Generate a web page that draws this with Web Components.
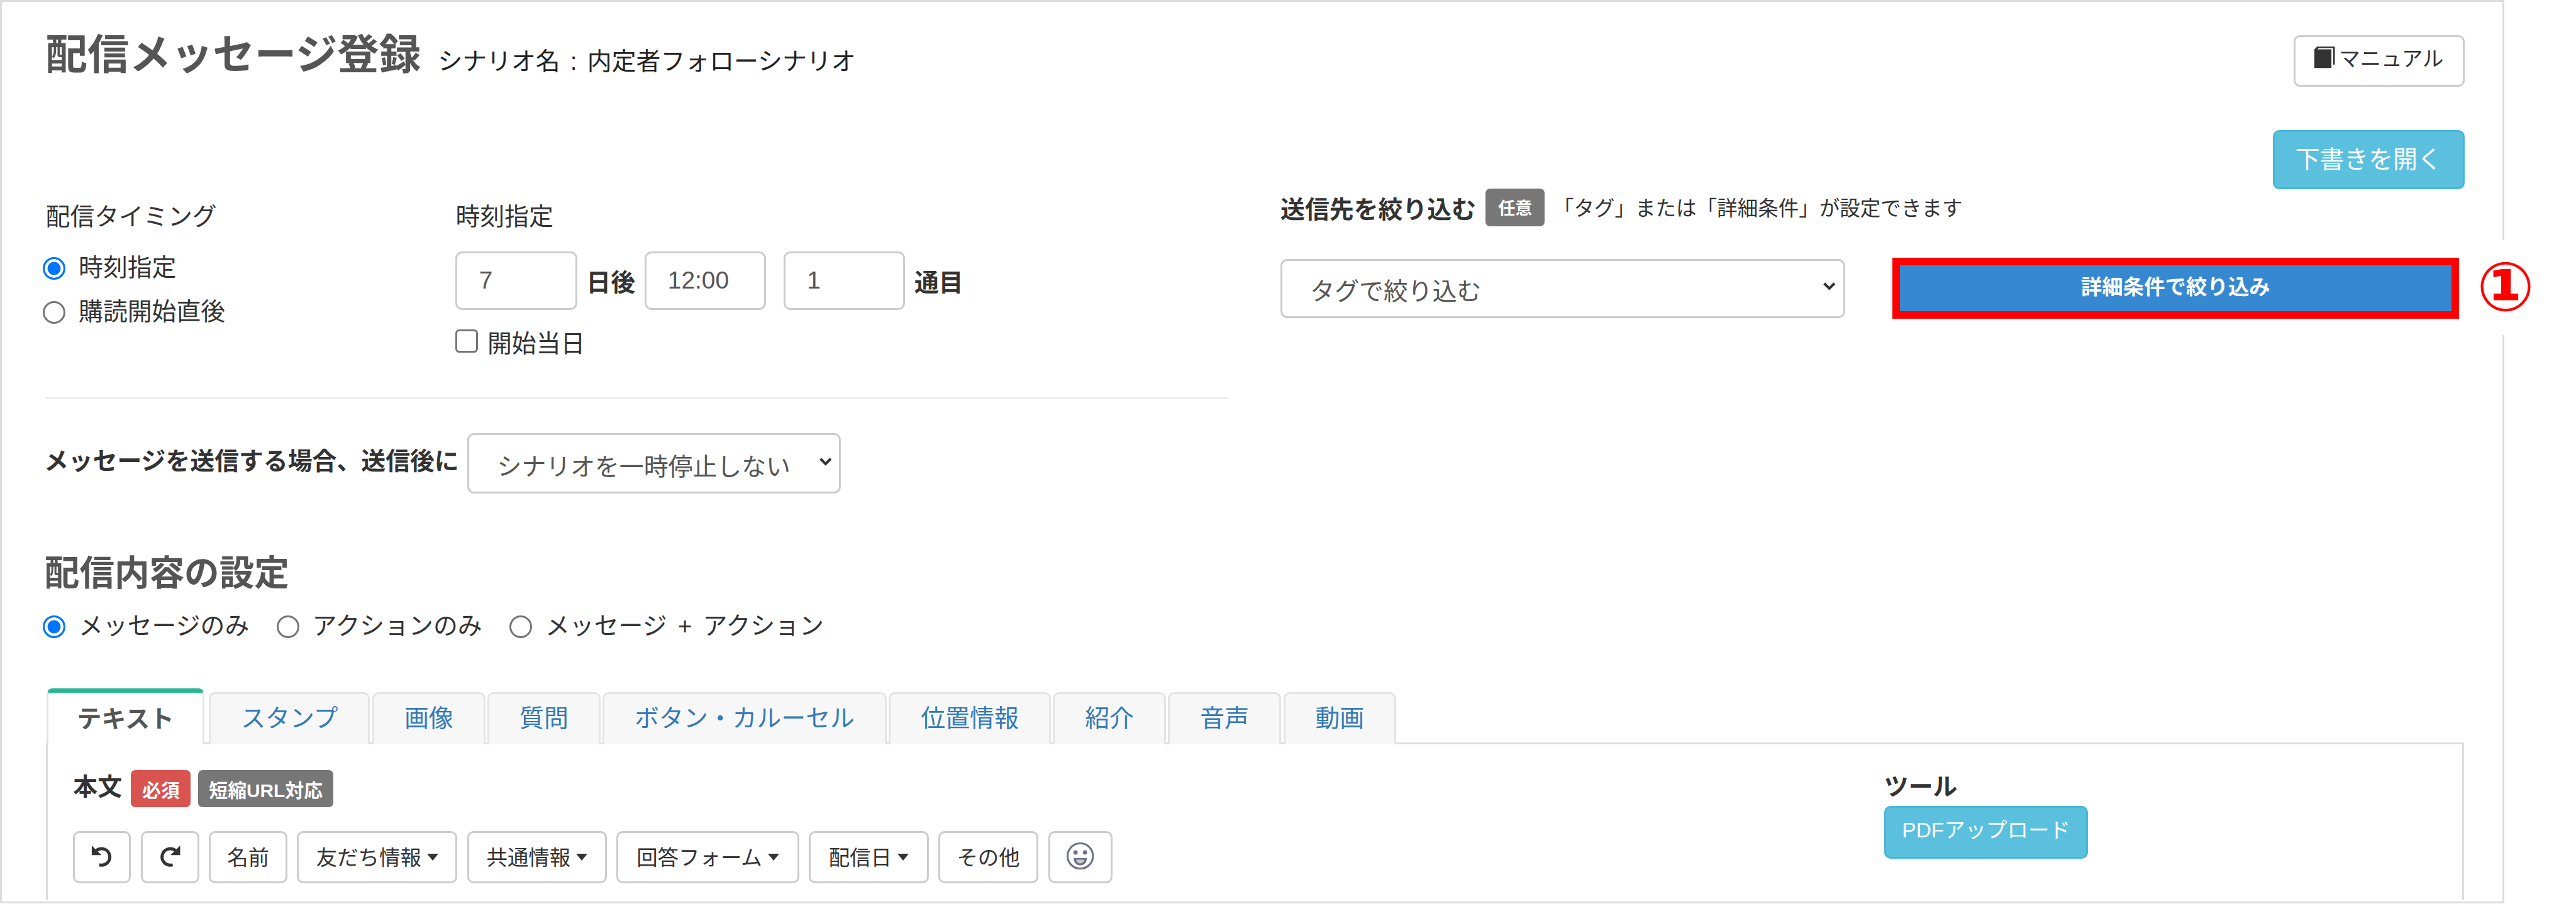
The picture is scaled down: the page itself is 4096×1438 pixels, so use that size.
<!DOCTYPE html>
<html lang="ja">
<head>
<meta charset="utf-8">
<title>配信メッセージ登録</title>
<style>
    /* 1rem = 10 reference pixels at the 0.904 scale */
    html { font-size: 9.04px; overflow: hidden; }
    body {
        margin: 0;
        background: #fff;
        color: #333;
        font-family: "Liberation Sans", "Noto Sans CJK JP", sans-serif;
        font-size: 4.3rem;
    }
    .timing { display: grid; grid-template-columns: 72.1rem 1fr; padding-top: 12.3rem; }
    .stack { display: flex; flex-direction: column; }
    .inputs { display: flex; align-items: center; margin-top: 3rem; height: 10.3rem; }
    .pick { display: flex; margin-top: 5.5rem; align-items: center; justify-content: space-between; }
</style>
</head>
<body>
<page-frame>
    <page-head slot="head"></page-head>

    <two-cols>
        <div slot="left">
            <div class="timing">
                <div class="stack">
                    <field-label>配信タイミング</field-label>
                    <radio-list>
                        <ui-radio checked style="height:7.7rem">時刻指定</ui-radio>
                        <ui-radio style="height:7.7rem">購読開始直後</ui-radio>
                    </radio-list>
                </div>
                <div class="stack">
                    <field-label>時刻指定</field-label>
                    <div class="inputs">
                        <ui-input>7</ui-input>
                        <b style="width:11.8rem;padding-left:1.6rem;box-sizing:border-box">日後</b>
                        <ui-input>12:00</ui-input>
                        <span style="width:3.1rem"></span>
                        <ui-input>1</ui-input>
                        <b style="padding-left:1.6rem">通目</b>
                    </div>
                    <ui-check>開始当日</ui-check>
                </div>
            </div>
            <section-rule></section-rule>
        </div>
        <div slot="right">
            <ui-btn kind="info" style="margin-left:auto;width:33.7rem;height:10.4rem;padding-bottom:1rem">下書きを開く</ui-btn>
            <target-row></target-row>
            <div class="pick">
                <ui-select style="width:99.3rem;height:10.4rem">タグで絞り込む</ui-select>
                <focus-button>詳細条件で絞り込み</focus-button>
            </div>
        </div>
    </two-cols>

    <message-row></message-row>
    <section-head>配信内容の設定</section-head>
    <radio-list row>
        <ui-radio checked>メッセージのみ</ui-radio>
        <ui-radio>アクションのみ</ui-radio>
        <ui-radio>メッセージ + アクション</ui-radio>
    </radio-list>
    <tab-bar>
        <tab-item active>テキスト</tab-item>
        <tab-item>スタンプ</tab-item>
        <tab-item>画像</tab-item>
        <tab-item>質問</tab-item>
        <tab-item>ボタン・カルーセル</tab-item>
        <tab-item>位置情報</tab-item>
        <tab-item>紹介</tab-item>
        <tab-item>音声</tab-item>
        <tab-item>動画</tab-item>
    </tab-bar>
    <editor-panel></editor-panel>

    <step-mark slot="over">①</step-mark>
</page-frame>

<script>
class PageFrame extends HTMLElement {
    constructor() {
        super();
        this.shadowDOM = this.attachShadow({mode: 'open'});
        this.shadowDOM.innerHTML = `
        <style>
            :host {
                display: block;
                position: relative;
                box-sizing: border-box;
                width: 440.5rem;
                height: 159rem;
                border: solid #ddd;
                border-width: 3px;
                padding: 0 6.7rem 0 7.7rem;
            }
        </style>
        <slot name="head"></slot>
        <slot></slot>
        <slot name="over"></slot>
        `;
    }
}

class PageHead extends HTMLElement {
    constructor() {
        super();
        this.shadowDOM = this.attachShadow({mode: 'open'});
        this.shadowDOM.innerHTML = `
        <style>
            :host { display: flex; justify-content: space-between; align-items: flex-start; padding-top: 5.9rem; }
            .title { display: flex; align-items: baseline; gap: 3rem; margin-top: -.2rem; }
            h1 { margin: 0; font-size: 7.35rem; line-height: 7.2rem; font-weight: 700; color: #555; }
            span { font-size: 4.3rem; line-height: 4.3rem; color: #222; word-spacing: .6rem; position: relative; top: .2rem; }
            svg { width: 3.6rem; height: 4rem; margin-right: .7rem; flex: none; }
        </style>
        <div class="title">
            <h1>配信メッセージ登録</h1>
            <span>シナリオ名 : 内定者フォローシナリオ</span>
        </div>
        <ui-btn style="width:30rem;height:9rem;font-size:3.7rem;padding-bottom:1.4rem">
            <svg viewBox="0 0 36 40"><path fill="#333" d="M5 1h31v32h-3V4H8L5 6h25v33H0V6z"/></svg>マニュアル
        </ui-btn>
        `;
    }
}

class TwoCols extends HTMLElement {
    constructor() {
        super();
        this.shadowDOM = this.attachShadow({mode: 'open'});
        this.shadowDOM.innerHTML = `
        <style>
            :host { display: grid; grid-template-columns: 208.1rem 1fr; column-gap: 9.1rem; margin-top: 7.7rem; }
            slot[name=right]::slotted(div) { display: flex; flex-direction: column; }
        </style>
        <slot name="left"></slot>
        <slot name="right"></slot>
        `;
    }
}

class FieldLabel extends HTMLElement {
    constructor() {
        super();
        this.attachShadow({mode: 'open'}).innerHTML = `
        <style>:host { display: block; line-height: 6rem; font-size: 4.3rem; color: #333; }</style>
        <slot></slot>`;
    }
}

class RadioList extends HTMLElement {
    constructor() {
        super();
        this.attachShadow({mode: 'open'}).innerHTML = `
        <style>
            :host { display: flex; flex-direction: column; margin: 2.2rem 0 0 -.5rem; }
            :host([row]) { flex-direction: row; gap: 4.8rem; margin-top: 2.6rem; }
        </style>
        <slot></slot>`;
    }
}

class UiRadio extends HTMLElement {
    constructor() {
        super();
        this.attachShadow({mode: 'open'}).innerHTML = `
        <style>
            :host { display: flex; align-items: center; gap: 2.3rem; height: 6rem; font-size: 4.3rem; color: #333; }
            i { box-sizing: border-box; width: 4rem; height: 4rem; border-radius: 50%; border: 3px solid #767676; background: #fff; flex: none; }
            :host([checked]) i { border-color: #0075ff; background: #0075ff; box-shadow: inset 0 0 0 .5rem #fff; }
            span { padding-bottom: 1.1rem; word-spacing: .7rem; }
        </style>
        <i></i><span><slot></slot></span>`;
    }
}

class UiInput extends HTMLElement {
    constructor() {
        super();
        this.attachShadow({mode: 'open'}).innerHTML = `
        <style>
            :host {
                display: flex; align-items: center; box-sizing: border-box;
                width: 21.4rem; height: 10.3rem; padding-left: 3.8rem;
                border: 3px solid #ccc; border-radius: 1.2rem;
                font-size: 4.3rem; color: #555; background: #fff;
            }
        </style>
        <slot></slot>`;
    }
}

class UiCheck extends HTMLElement {
    constructor() {
        super();
        this.attachShadow({mode: 'open'}).innerHTML = `
        <style>
            :host { display: flex; align-items: center; gap: 1.7rem; height: 6rem; margin-top: 2.5rem; font-size: 4.3rem; color: #333; }
            i { box-sizing: border-box; width: 3.9rem; height: 4.1rem; border: 3px solid #767676; border-radius: .7rem; background: #fff; }
        </style>
        <i></i><span><slot></slot></span>`;
    }
}

class SectionRule extends HTMLElement {
    constructor() {
        super();
        this.attachShadow({mode: 'open'}).innerHTML = `
        <style>:host { display: block; margin-top: 6.9rem; border-top: 3px solid #eee; }</style>`;
    }
}

class UiBtn extends HTMLElement {
    constructor() {
        super();
        this.attachShadow({mode: 'open'}).innerHTML = `
        <style>
            :host {
                display: inline-flex; align-items: center; justify-content: center; box-sizing: border-box;
                border: 3px solid #ccc; border-radius: 1.1rem;
                background: #fff; color: #333; font-size: 4.3rem; white-space: nowrap;
            }
            :host([kind=info]) { background: #5bc0de; border-color: #46b8da; color: #fff; }
        </style>
        <slot></slot>`;
    }
}

class UiSelect extends HTMLElement {
    constructor() {
        super();
        this.attachShadow({mode: 'open'}).innerHTML = `
        <style>
            :host {
                display: flex; align-items: center; justify-content: space-between; box-sizing: border-box;
                padding: 0 1.1rem 0 4.9rem;
                border: 3px solid #ccc; border-radius: 1.2rem;
                background: #fff; color: #555; font-size: 4.3rem;
            }
            span { padding-top: .4rem; }
            svg { width: 2.6rem; height: 1.7rem; margin-top: -.6rem; }
        </style>
        <span><slot></slot></span>
        <svg viewBox="0 0 26 17"><path d="M4 3l9 9 9-9" fill="none" stroke="#333" stroke-width="4.5"/></svg>`;
    }
}

class FocusButton extends HTMLElement {
    constructor() {
        super();
        this.attachShadow({mode: 'open'}).innerHTML = `
        <style>
            :host {
                display: flex; align-items: center; justify-content: center; box-sizing: border-box;
                width: 99.6rem; height: 10.8rem; margin-right: 1rem; padding-bottom: 1.2rem;
                border: 12px solid #f00;
                background: #3688d0; color: #fff; font-size: 3.7rem; font-weight: 700;
            }
        </style>
        <slot></slot>`;
    }
}

class TargetRow extends HTMLElement {
    constructor() {
        super();
        this.attachShadow({mode: 'open'}).innerHTML = `
        <style>
            :host { display: flex; align-items: center; height: 6.7rem; margin-top: -.2rem; color: #333; }
            b { font-size: 4.3rem; }
            em {
                display: flex; align-items: center; justify-content: center;
                width: 10.4rem; height: 6.7rem; margin: 0 1.5rem 0 1.7rem;
                border-radius: .8rem; background: #777; color: #fff;
                font-size: 3rem; font-weight: 700; font-style: normal;
            }
            span { font-size: 3.6rem; padding-bottom: .3rem; }
        </style>
        <b>送信先を絞り込む</b><em>任意</em><span>「タグ」または「詳細条件」が設定できます</span>`;
    }
}

class MessageRow extends HTMLElement {
    constructor() {
        super();
        this.attachShadow({mode: 'open'}).innerHTML = `
        <style>
            :host { display: flex; align-items: center; gap: 1.5rem; margin: 6rem 0 0 -.3rem; }
            b { font-size: 4.3rem; color: #333; margin-top: -1.6rem; }
        </style>
        <b>メッセージを送信する場合、送信後に</b>
        <ui-select style="width:65.7rem;height:10.6rem">シナリオを一時停止しない</ui-select>`;
    }
}

class SectionHead extends HTMLElement {
    constructor() {
        super();
        this.attachShadow({mode: 'open'}).innerHTML = `
        <style>:host { display: block; margin: 9.8rem 0 0 -.2rem; padding-top: .3rem; height: 7.7rem; font-size: 6.15rem; line-height: 8rem; font-weight: 700; color: #555; }</style>
        <slot></slot>`;
    }
}

class TabBar extends HTMLElement {
    constructor() {
        super();
        this.attachShadow({mode: 'open'}).innerHTML = `
        <style>
            :host { display: flex; align-items: flex-end; gap: .4rem; position: relative; z-index: 1; margin: 7.9rem 0 -3px .2rem; }
        </style>
        <slot></slot>`;
    }
}

class TabItem extends HTMLElement {
    constructor() {
        super();
        this.attachShadow({mode: 'open'}).innerHTML = `
        <style>
            :host {
                display: flex; align-items: center; box-sizing: border-box;
                height: 9.2rem; padding: 0 5.3rem 1rem;
                border: 3px solid #e4e4e4; border-bottom: 0; border-radius: 1.1rem 1.1rem 0 0;
                background: #f7f7f7; color: #337ab7; font-size: 4.3rem;
            }
            :host([active]) {
                height: 9.8rem; padding: 0 5rem .6rem; margin-right: .4rem;
                border-top: .8rem solid #2bb594; border-radius: 1rem 1rem 0 0;
                background: #fff; color: #555; font-weight: 700;
            }
        </style>
        <slot></slot>`;
    }
}

class EditorPanel extends HTMLElement {
    constructor() {
        super();
        const arrow = `<path fill="none" stroke="#333" stroke-width="5.5" d="M9 10a14.5 14.5 0 1 1 5 25"/><path fill="#333" d="M1 1v17h17z"/>`;
        const face = `<svg viewBox="0 0 48 48" style="width:4.8rem;height:4.8rem"><circle cx="24" cy="24" r="22.3" fill="none" stroke="#6d7186" stroke-width="3.4"/><circle cx="15.7" cy="17.7" r="3.8" fill="#6d7186"/><circle cx="32.3" cy="17.7" r="3.8" fill="#6d7186"/><path d="M12.3 27.3h23.4c0 8-5 13-11.7 13s-11.7-5-11.7-13z" fill="#6d7186"/><path d="M17 30.3h14c-1 4-3 6.5-7 6.5s-6-2.5-7-6.5z" fill="#c9cad3"/></svg>`;
        this.attachShadow({mode: 'open'}).innerHTML = `
        <style>
            :host {
                display: flex; justify-content: space-between; box-sizing: border-box;
                width: 425.4rem; height: 27.8rem; padding: 4.6rem 0 0 4.5rem;
                border: solid #ddd; border-width: 3px 3px 0;
                overflow: hidden;
            }
            .head { display: flex; align-items: center; height: 6.5rem; }
            b { font-size: 4.3rem; color: #333; }
            .head b { padding-bottom: 1.6rem; }
            em {
                display: flex; align-items: center; justify-content: center; height: 6.5rem;
                border-radius: .8rem; color: #fff; font-size: 3.3rem; font-weight: 700; font-style: normal;
            }
            .red { background: #d9534f; width: 10.5rem; margin-left: 1.6rem; }
            .gray { background: #777; width: 23.8rem; margin-left: 1.3rem; }
            .bar { display: flex; gap: 1.7rem; margin-top: 4.2rem; }
            .bar ui-btn { height: 9.2rem; font-size: 3.7rem; padding-bottom: .5rem; }
            .bar svg.arrow { width: 3.8rem; height: 3.8rem; }
            u { width: 0; height: 0; margin-left: 1rem; border: 1rem solid transparent; border-top: 1.3rem solid #333; border-bottom: 0; margin-top: .5rem; }
            .tool { width: 101.7rem; flex: none; }
            .tool b { display: block; line-height: 6rem; }
        </style>
        <div>
            <div class="head"><b>本文</b><em class="red">必須</em><em class="gray">短縮URL対応</em></div>
            <div class="bar">
                <ui-btn style="width:10.2rem"><svg class="arrow" viewBox="0 0 38 38">${arrow}</svg></ui-btn>
                <ui-btn style="width:10.3rem"><svg class="arrow" viewBox="0 0 38 38" style="transform:scaleX(-1)">${arrow}</svg></ui-btn>
                <ui-btn style="width:13.8rem">名前</ui-btn>
                <ui-btn style="width:28.2rem">友だち情報<u></u></ui-btn>
                <ui-btn style="width:24.6rem">共通情報<u></u></ui-btn>
                <ui-btn style="width:32.1rem">回答フォーム<u></u></ui-btn>
                <ui-btn style="width:21.1rem">配信日<u></u></ui-btn>
                <ui-btn style="width:17.6rem">その他</ui-btn>
                <ui-btn style="width:11.3rem">${face}</ui-btn>
            </div>
        </div>
        <div class="tool">
            <b>ツール</b>
            <ui-btn kind="info" style="width:35.9rem;height:9.3rem;font-size:3.7rem;margin-top:.3rem;padding-bottom:1.6rem">PDFアップロード</ui-btn>
        </div>`;
    }
}

class StepMark extends HTMLElement {
    constructor() {
        super();
        this.attachShadow({mode: 'open'}).innerHTML = `
        <style>
            :host {
                position: absolute; left: 433.4rem; top: 41.9rem; width: 14rem; height: 16.7rem;
                display: flex; align-items: center; justify-content: center;
                background: #fff; color: #f00; font-size: 12rem; font-weight: 700; line-height: 1;
                font-family: "DejaVu Sans", "Noto Sans CJK JP", sans-serif;
            }
        </style>
        <slot></slot>`;
    }
}

customElements.define('page-frame', PageFrame);
customElements.define('page-head', PageHead);
customElements.define('two-cols', TwoCols);
customElements.define('field-label', FieldLabel);
customElements.define('radio-list', RadioList);
customElements.define('ui-radio', UiRadio);
customElements.define('ui-input', UiInput);
customElements.define('ui-check', UiCheck);
customElements.define('section-rule', SectionRule);
customElements.define('ui-btn', UiBtn);
customElements.define('ui-select', UiSelect);
customElements.define('focus-button', FocusButton);
customElements.define('target-row', TargetRow);
customElements.define('message-row', MessageRow);
customElements.define('section-head', SectionHead);
customElements.define('tab-bar', TabBar);
customElements.define('tab-item', TabItem);
customElements.define('editor-panel', EditorPanel);
customElements.define('step-mark', StepMark);
</script>
</body>
</html>
